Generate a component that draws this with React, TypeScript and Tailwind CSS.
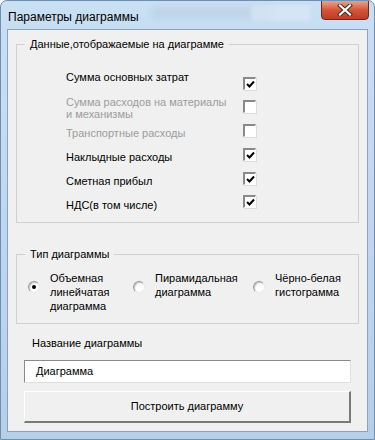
import React from 'react'

const rows = [
  {label: 'Сумма основных затрат', on: true, dim: false, h: 'h-[25px]', lt: 'mt-0', ct: 'mt-[6px]'},
  {label: 'Сумма расходов на материалы\nи механизмы', on: false, dim: true, h: 'h-[28px]', lt: 'mt-0', ct: 'mt-[4px]'},
  {label: 'Транспортные расходы', on: false, dim: true, h: 'h-[24px]', lt: 'mt-[3px]', ct: 'mt-0'},
  {label: 'Наклыдные расходы', on: true, dim: false, h: 'h-[24px]', lt: 'mt-[3px]', ct: 'mt-0'},
  {label: 'Сметная прибыл', on: true, dim: false, h: 'h-[23px]', lt: 'mt-[3px]', ct: 'mt-0'},
  {label: 'НДС(в том числе)', on: true, dim: false, h: 'h-[23px]', lt: 'mt-[4px]', ct: 'mt-0'},
]

const CheckBox = ({on}: {on: boolean}) => (
  <div className="w-[13px] h-[13px] border-t-2 border-l-2 border-t-[#8a8a8a] border-l-[#8a8a8a] border-b border-r border-b-white border-r-white bg-white flex items-center justify-center shadow-[1px_1px_0_#dcdcdc]">
    {on ? (
      <svg width="9" height="9" viewBox="0 0 9 9">
        <path d="M1 4 L3.5 6.5 L8 1.5" stroke="#000" strokeWidth="2" fill="none" />
      </svg>
    ) : null}
  </div>
)

const Radio = ({on}: {on: boolean}) => (
  <div className="w-[12px] h-[12px] rounded-full bg-white border border-t-[#9a9a9a] border-l-[#9a9a9a] border-b-[#e8e8e8] border-r-[#e8e8e8] flex items-center justify-center shadow-[inset_1px_1px_1px_#c0c0c0]">
    {on ? <div className="w-[4px] h-[4px] rounded-full bg-black" /> : null}
  </div>
)

export default function App() {
  return (
    <div
      className="w-[375px] h-[440px] bg-gradient-to-b from-[#c9dff4] to-[#b6cfe9] rounded-t-[7px] border border-[#6f8fb0] flex flex-col text-[11px] text-black overflow-hidden"
      style={{fontFamily: '"Liberation Sans", Arial, sans-serif'}}
    >
      {/* title bar */}
      <div className="h-[28px] flex items-start relative">
        <div className="pl-[7px] pt-[7px] text-[12px] text-black">Параметры диаграммы</div>
        <div className="absolute left-[150px] top-[6px] w-[120px] h-[12px] rounded bg-[#b6cbe0] opacity-50 blur-[3px]" />
        <div className="absolute left-[250px] top-[4px] w-[60px] h-[16px] rounded bg-[#dfeaf5] opacity-60 blur-[2px]" />
        <div className="absolute left-[320px] top-[-1px] w-[48px] h-[20px] rounded-b-[4px] border border-[#6b2a1f] bg-gradient-to-b from-[#e8a290] via-[#d2553a] to-[#c23a22] flex items-center justify-center">
          <svg width="16" height="12" viewBox="0 0 16 12">
            <path d="M3 1.5 L13 10.5 M13 1.5 L3 10.5" stroke="#3d2a2a" strokeWidth="4" strokeLinecap="square" />
            <path d="M3 1.5 L13 10.5 M13 1.5 L3 10.5" stroke="#fff" strokeWidth="2.2" strokeLinecap="square" />
          </svg>
        </div>
      </div>

      {/* client area */}
      <div className="mx-[6px] mb-[7px] flex-1 bg-[#f0f0f0] border border-[#8da2b8] px-[8px] flex flex-col">
        <fieldset className="mt-[7px] border border-[#d0d0d0] h-[186px]">
          <legend className="ml-[8px] px-[5px] leading-[14px]">Данные,отображаемые на диаграмме</legend>
          <div className="flex flex-col mt-[20px] pl-[49px]">
            {rows.map((r) => (
              <div key={r.label} className={`flex ${r.h}`}>
                <div className={`w-[177px] leading-[12px] whitespace-pre ${r.lt} ${r.dim ? 'text-[#9c9c9c]' : 'text-black'}`}>
                  {r.label}
                </div>
                <div className={r.ct}>
                  <CheckBox on={r.on} />
                </div>
              </div>
            ))}
          </div>
        </fieldset>

        <fieldset className="mt-[24px] border border-[#d0d0d0] h-[77px]">
          <legend className="ml-[8px] px-[5px] leading-[14px]">Тип диаграммы</legend>
          <div className="flex mt-[10px] pl-[11px]">
            <div className="flex items-start w-[105px]">
              <div className="mt-[10px] mr-[10px]"><Radio on={true} /></div>
              <div className="leading-[14px]">Объемная<br />линейчатая<br />диаграмма</div>
            </div>
            <div className="flex items-start w-[120px]">
              <div className="mt-[10px] mr-[10px]"><Radio on={false} /></div>
              <div className="leading-[14px]">Пирамидальная<br />диаграмма</div>
            </div>
            <div className="flex items-start">
              <div className="mt-[10px] mr-[10px]"><Radio on={false} /></div>
              <div className="leading-[14px]">Чёрно-белая<br />гистограмма</div>
            </div>
          </div>
        </fieldset>

        <div className="mt-[12px] pl-[16px] leading-[14px]">Название диаграммы</div>
        <div className="mt-[10px] mx-[8px] h-[23px] bg-white border border-t-[#8a8a8a] border-l-[#8a8a8a] border-b-[#e0e0e0] border-r-[#e0e0e0] pl-[11px] flex items-center">
          Диаграмма
        </div>
        <div className="mt-[8px] mx-[8px] h-[32px] bg-[#f0f0f0] border-t border-l border-t-white border-l-white border-b-2 border-r-2 border-b-[#7a7a7a] border-r-[#7a7a7a] flex items-center justify-center">
          Построить диаграмму
        </div>
      </div>
    </div>
  )
}
